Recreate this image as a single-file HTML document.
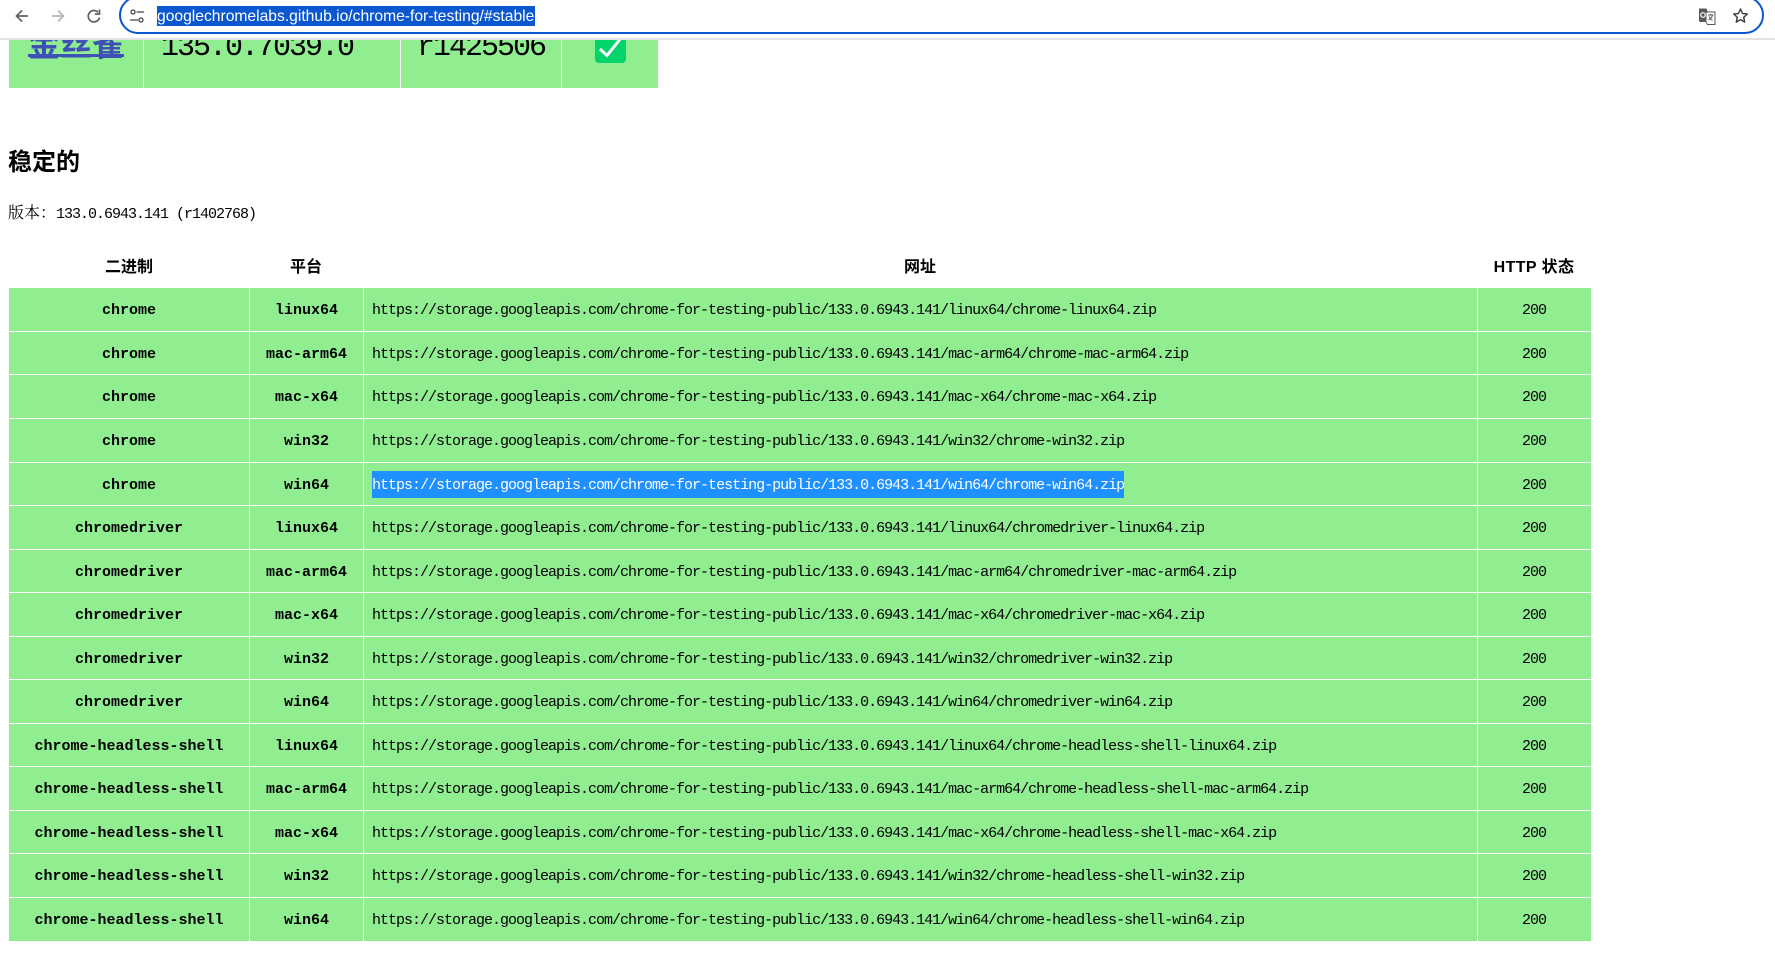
<!DOCTYPE html>
<html lang="zh">
<head>
<meta charset="utf-8">
<title>Chrome for Testing availability</title>
<style>
html,body{margin:0;padding:0;background:#fff;width:1775px;height:958px;overflow:hidden}
body{position:relative;color:#000;font-family:"Liberation Mono","Noto Serif CJK SC",monospace}
#bar{position:absolute;left:0;top:0;width:1775px;height:38px;background:#fff;border-bottom:2px solid #e3e3e3;z-index:5;overflow:hidden}
#omni{position:absolute;left:119px;top:-4px;width:1641px;height:34px;border:2.5px solid #0b57d0;border-radius:20px;background:#fff}
#url{position:absolute;left:157px;top:6px;height:20px;width:378px;background:#0b57d0;color:#fff;font:15.65px/21px "Liberation Sans",sans-serif;white-space:nowrap;overflow:hidden}
#bar svg{position:absolute}
#top{position:absolute;left:9px;top:0;width:649px;height:88px;background:#90ee90}
#top i{position:absolute;top:0;width:1px;height:88px;background:#fff}
#top .m{position:absolute;top:30px;font-size:30px;line-height:36px;letter-spacing:-2px;white-space:pre}
#top a{position:absolute;left:19px;top:24px;font:bold 32px/38px "Noto Sans CJK SC",sans-serif;color:#3f51b5;text-decoration:underline;text-decoration-thickness:3px;text-underline-offset:-2px}
#chk{position:absolute;left:586px;top:30px;width:31px;height:33px;background:#00d46a;border-radius:4px}
h2{position:absolute;left:8px;top:142px;margin:0;font:bold 24px/36px "Noto Sans CJK SC",sans-serif}
#ver{position:absolute;left:8px;top:202px;font-size:15px;line-height:20px;letter-spacing:-1px;white-space:pre}
#ver b{font:400 16px/20px "Noto Serif CJK SC",serif;letter-spacing:0}
table{position:absolute;left:9px;top:245px;width:1582px;table-layout:fixed;border-collapse:separate;border-spacing:0}
th{height:43px;padding:2px 0 0;box-sizing:border-box;font:bold 16px/20px "Liberation Sans","Noto Sans CJK SC",sans-serif;text-align:center;vertical-align:middle}
th:last-child{letter-spacing:.4px}
td{padding:3px 0 0;background:#90ee90;text-align:center;vertical-align:middle;font-size:15px;line-height:20px;letter-spacing:-1px;border-left:1px solid #fff;border-bottom:1px solid #fff;box-sizing:border-box;white-space:nowrap;overflow:hidden}
td:first-child{border-left:0}
td:last-child{padding-right:1px}
tr:last-child td{border-bottom:0}
td:nth-child(-n+2){font-weight:bold;letter-spacing:0}
td:nth-child(3){text-align:left;padding-left:8px}
td.h{height:44px}td.s{height:43px}
.sel{background:#1e90ff;color:#fff;display:inline-block;height:27px;line-height:29px;position:relative;top:-1.5px}
</style>
</head>
<body>
<div id="top">
  <a href="#">金丝雀</a>
  <i style="left:134px"></i><i style="left:391px"></i><i style="left:552px"></i>
  <span class="m" style="left:152px">135.0.7039.0</span>
  <span class="m" style="left:408px">r1425506</span>
  <div id="chk"><svg width="31" height="33" viewBox="0 0 31 33"><path d="M5 19l7 6.500L26 8" fill="none" stroke="#fff" stroke-width="3"/></svg></div>
</div>
<h2>稳定的</h2>
<div id="ver"><b>版本：</b>133.0.6943.141 (r1402768)</div>
<table>
<colgroup><col style="width:240px"><col style="width:114px"><col style="width:1114px"><col style="width:114px"></colgroup>
<tr><th>二进制</th><th>平台</th><th>网址</th><th>HTTP 状态</th></tr>
<tr><td class="h">chrome</td><td>linux64</td><td>https://storage.googleapis.com/chrome-for-testing-public/133.0.6943.141/linux64/chrome-linux64.zip</td><td>200</td></tr>
<tr><td class="s">chrome</td><td>mac-arm64</td><td>https://storage.googleapis.com/chrome-for-testing-public/133.0.6943.141/mac-arm64/chrome-mac-arm64.zip</td><td>200</td></tr>
<tr><td class="h">chrome</td><td>mac-x64</td><td>https://storage.googleapis.com/chrome-for-testing-public/133.0.6943.141/mac-x64/chrome-mac-x64.zip</td><td>200</td></tr>
<tr><td class="h">chrome</td><td>win32</td><td>https://storage.googleapis.com/chrome-for-testing-public/133.0.6943.141/win32/chrome-win32.zip</td><td>200</td></tr>
<tr><td class="s">chrome</td><td>win64</td><td><span class="sel">https://storage.googleapis.com/chrome-for-testing-public/133.0.6943.141/win64/chrome-win64.zip</span></td><td>200</td></tr>
<tr><td class="h">chromedriver</td><td>linux64</td><td>https://storage.googleapis.com/chrome-for-testing-public/133.0.6943.141/linux64/chromedriver-linux64.zip</td><td>200</td></tr>
<tr><td class="s">chromedriver</td><td>mac-arm64</td><td>https://storage.googleapis.com/chrome-for-testing-public/133.0.6943.141/mac-arm64/chromedriver-mac-arm64.zip</td><td>200</td></tr>
<tr><td class="h">chromedriver</td><td>mac-x64</td><td>https://storage.googleapis.com/chrome-for-testing-public/133.0.6943.141/mac-x64/chromedriver-mac-x64.zip</td><td>200</td></tr>
<tr><td class="s">chromedriver</td><td>win32</td><td>https://storage.googleapis.com/chrome-for-testing-public/133.0.6943.141/win32/chromedriver-win32.zip</td><td>200</td></tr>
<tr><td class="h">chromedriver</td><td>win64</td><td>https://storage.googleapis.com/chrome-for-testing-public/133.0.6943.141/win64/chromedriver-win64.zip</td><td>200</td></tr>
<tr><td class="s">chrome-headless-shell</td><td>linux64</td><td>https://storage.googleapis.com/chrome-for-testing-public/133.0.6943.141/linux64/chrome-headless-shell-linux64.zip</td><td>200</td></tr>
<tr><td class="h">chrome-headless-shell</td><td>mac-arm64</td><td>https://storage.googleapis.com/chrome-for-testing-public/133.0.6943.141/mac-arm64/chrome-headless-shell-mac-arm64.zip</td><td>200</td></tr>
<tr><td class="s">chrome-headless-shell</td><td>mac-x64</td><td>https://storage.googleapis.com/chrome-for-testing-public/133.0.6943.141/mac-x64/chrome-headless-shell-mac-x64.zip</td><td>200</td></tr>
<tr><td class="h">chrome-headless-shell</td><td>win32</td><td>https://storage.googleapis.com/chrome-for-testing-public/133.0.6943.141/win32/chrome-headless-shell-win32.zip</td><td>200</td></tr>
<tr><td class="s">chrome-headless-shell</td><td>win64</td><td>https://storage.googleapis.com/chrome-for-testing-public/133.0.6943.141/win64/chrome-headless-shell-win64.zip</td><td>200</td></tr>
</table>
<div id="bar">
  <svg style="left:14px;top:8px" width="16" height="16" viewBox="0 0 16 16"><path d="M14 8H3M8 2.500L2.500 8 8 13.500" fill="none" stroke="#5f6368" stroke-width="1.700"/></svg>
  <svg style="left:50px;top:8px" width="16" height="16" viewBox="0 0 16 16"><path d="M2 8h11M8 2.500L13.500 8 8 13.500" fill="none" stroke="#b4b6b9" stroke-width="1.700"/></svg>
  <svg style="left:86px;top:8px" width="16" height="16" viewBox="0 0 16 16"><path d="M13.500 9.500A5.700 5.700 0 1 1 12 4.200M13.500 1.500v4.500H9" fill="none" stroke="#5f6368" stroke-width="1.700"/></svg>
  <div id="omni"></div>
  <svg style="left:129px;top:8px" width="16" height="16" viewBox="0 0 16 16"><g fill="none" stroke="#444" stroke-width="1.300"><circle cx="4" cy="4" r="2"/><circle cx="12" cy="12" r="2"/><path d="M7.500 4H15M1 12h8"/></g></svg>
  <div id="url">googlechromelabs.github.io/chrome-for-testing/#stable</div>
  <svg style="left:1698px;top:7px" width="18" height="18" viewBox="0 0 18 18"><path d="M1 1.500h7.500l1 2.500v11H2.500A1.500 1.500 0 0 1 1 13.500z" fill="#5a5a5a"/><path d="M8 5h9v12.500H9.500L8 15z" fill="#fff" stroke="#5a5a5a" stroke-width="1"/><circle cx="5" cy="8" r="2.300" fill="none" stroke="#fff" stroke-width="1.200"/><path d="M10 8h5.500M12.500 7v1M14.500 8c-.5 2.500-2 4-4 5M11 9.500c.8 1.500 2 3 3.500 4" fill="none" stroke="#5a5a5a"/></svg>
  <svg style="left:1732px;top:7px" width="17" height="17" viewBox="0 0 17 17"><path d="M8.500 2l2 4.500 4.800.5-3.600 3.300 1 4.800-4.200-2.500-4.200 2.500 1-4.800L1.700 7l4.800-.5z" fill="none" stroke="#444" stroke-width="1.500" stroke-linejoin="round"/></svg>
</div>
</body>
</html>
